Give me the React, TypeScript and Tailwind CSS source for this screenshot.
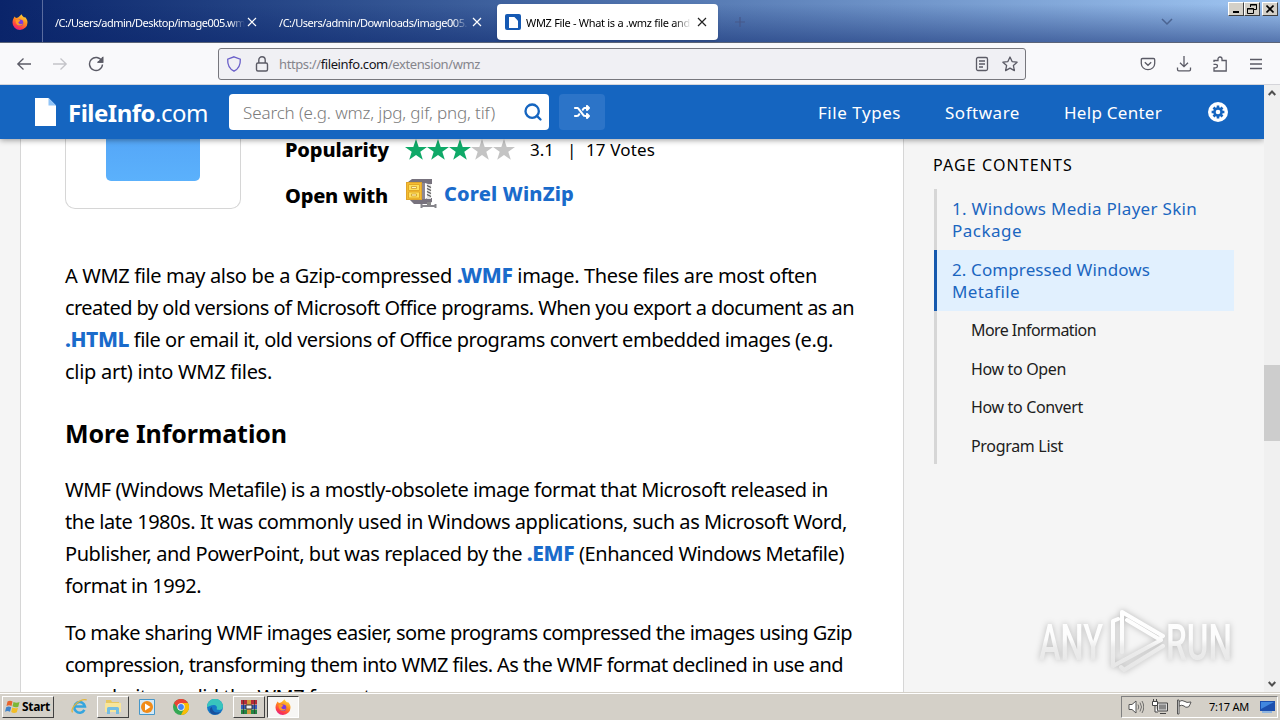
import { ReactNode, useLayoutEffect, useRef, useState } from 'react'
import { Search } from 'lucide-react'
import { FaShuffle } from 'react-icons/fa6'

interface ILine {
  children: ReactNode
  width: number
  classes?: string
}

// Single line of copy, tracked out to a given measure
function Line({ children, width, classes = '' }: ILine) {
  const ref = useRef<HTMLSpanElement>(null)
  const [spacing, setSpacing] = useState(0)

  useLayoutEffect(() => {
    const el = ref.current
    if (!el) return
    const count = el.textContent?.length || 1
    setSpacing((width - el.getBoundingClientRect().width) / count)
  }, [width])

  return (
    <span className={`block whitespace-nowrap ${classes}`}>
      <span ref={ref} style={{ letterSpacing: `${spacing}px` }}>
        {children}
      </span>
    </span>
  )
}

function FirefoxLogo({ classes }: { classes: string }) {
  return (
    <svg viewBox="0 0 16 16" className={classes}>
      <defs>
        <linearGradient id="fox" x1="0.8" y1="0" x2="0.3" y2="1">
          <stop offset="0" stopColor="#ffdf3c" />
          <stop offset="0.45" stopColor="#ff8a1e" />
          <stop offset="0.8" stopColor="#ff3b47" />
          <stop offset="1" stopColor="#e0208c" />
        </linearGradient>
      </defs>
      <path d="M2.5 2.5 4 4l2-.6C7.500 2.800 8 1.500 9.600.300c.3 1.500 1.600 2.100 2.500 3.200l.9-.5c2 2 2.600 4 2.500 5.700A7.500 7.300 0 0 1 .5 8.500C.5 6 1.500 4.500 2.500 2.500z" fill="url(#fox)" />
      <circle cx="8" cy="8.700" r="3.300" fill="#7a3be0" />
      <path d="M3.500 6.200c1.500-1 3-.7 4.800.2-.3 1-1.600 1.100-2 1.900.4 2 2.700 2.300 4.600 1.200-1 2.800-6 3-7-.8z" fill="#ff9a25" />
    </svg>
  )
}

function Close({ classes = 'text-white' }: { classes?: string }) {
  return (
    <svg viewBox="0 0 10 10" className={`h-2.5 w-2.5 shrink-0 ${classes}`} fill="none" stroke="currentColor" strokeWidth="1.200">
      <path d="M1 1l8 8M9 1l-8 8" />
    </svg>
  )
}

function WindowButton({ children }: { children: ReactNode }) {
  return (
    <span className="flex h-[14px] w-4 items-center justify-center border border-t-white border-l-white border-r-[#404040] border-b-[#404040] bg-[#d4d0c8]">
      {children}
    </span>
  )
}

function TabStrip() {
  return (
    <div className="relative flex h-[43px] shrink-0 border-b border-[#5b6478] bg-linear-to-r from-[#0a246a] to-[#a0c6f2] text-[11px]">
      <div className="absolute inset-0 bg-linear-to-b from-transparent from-10% to-[#0a246a]/50" />
      <div className="relative flex w-[43px] shrink-0 items-center justify-center border-r border-[#5a6c9f] pt-0.5 pr-0.5">
        <FirefoxLogo classes="h-4 w-4" />
      </div>
      <div className="relative flex w-[224px] shrink-0 items-center pt-[3px] pl-3 text-white">
        <div className="w-[190px] shrink-0 overflow-hidden pt-px mask-r-from-92%">
          <Line width={190}>/C:/Users/admin/Desktop/image005.wm</Line>
        </div>
        <span className="ml-0.5 flex pb-0.5">
          <Close />
        </span>
      </div>
      <div className="relative flex w-[230px] shrink-0 items-center pt-[3px] pl-3 text-white">
        <div className="w-[189px] shrink-0 overflow-hidden pt-px mask-r-from-92%">
          <Line width={188}>/C:/Users/admin/Downloads/image005.</Line>
        </div>
        <span className="ml-1 flex pb-0.5">
          <Close />
        </span>
      </div>
      <div className="relative mt-1 flex h-9 w-[221px] shrink-0 items-center rounded bg-white pl-2 text-black shadow">
        <span className="flex h-4 w-4 shrink-0 items-center justify-center rounded-xs bg-[#1559b3]">
          <svg viewBox="0 0 10 12" className="h-[11px] w-[9px]" fill="#fff">
            <path d="M0 0h6l4 4v8H0z" />
          </svg>
        </span>
        <div className="ml-[5px] w-[165px] shrink-0 overflow-hidden pt-0.5 mask-r-from-90%">
          <Line width={164}>WMZ File - What is a .wmz file and</Line>
        </div>
        <span className="ml-[6px] flex">
          <Close classes="text-[#222]" />
        </span>
      </div>
      <svg viewBox="0 0 10 10" className="relative mt-[17px] ml-[17px] h-2.5 w-2.5 shrink-0" stroke="#46588a" strokeWidth="1.200">
        <path d="M5 0v10M0 5h10" />
      </svg>
      <svg viewBox="0 0 12 8" className="relative mt-[18px] mr-[55px] ml-auto h-2 w-3 shrink-0" fill="none" stroke="#4b6491" strokeWidth="1.500">
        <path d="M1 1l5 5 5-5" />
      </svg>
      <div className="relative mt-0.5 mr-[2px] flex w-[50px] shrink-0 items-start">
        <WindowButton>
          <span className="mt-[6px] h-0.5 w-[6px] bg-black" />
        </WindowButton>
        <WindowButton>
          <svg viewBox="0 0 10 10" className="h-2.5 w-2.5" fill="none" stroke="#000">
            <path d="M3.500 3V.5h6v5H7M3 1h7M.5 4.500h6v5h-6zM0 5h7" />
          </svg>
        </WindowButton>
        <span className="ml-0.5">
          <WindowButton>
            <svg viewBox="0 0 8 8" className="h-2 w-2" stroke="#000" strokeWidth="1.600">
              <path d="M.5.5l7 7M7.500.5l-7 7" />
            </svg>
          </WindowButton>
        </span>
      </div>
    </div>
  )
}

function NavBar() {
  return (
    <div className="flex h-[42px] shrink-0 items-center border-b border-[#d5d5da] bg-[#f9f9fb] text-[#5b5b66]">
      <div className="flex w-[218px] items-center gap-5 pt-px pl-4">
        <svg viewBox="0 0 16 16" className="h-4 w-4" fill="none" stroke="currentColor" strokeWidth="1.300">
          <path d="M15 8H1.500M7.500 2.500L1.800 8l5.700 5.500" />
        </svg>
        <svg viewBox="0 0 16 16" className="h-4 w-4 text-[#c4c4c9]" fill="none" stroke="currentColor" strokeWidth="1.300">
          <path d="M1 8h13.500M8.500 2.500L14.200 8l-5.700 5.500" />
        </svg>
        <svg viewBox="0 0 16 16" className="h-4 w-4" fill="none" stroke="currentColor" strokeWidth="1.400">
          <path d="M13.800 5A6.500 6.500 0 1 0 14.500 8.500M14.600 1v5H9.700" />
          <path d="M14.600 2v4h-4z" fill="currentColor" />
        </svg>
      </div>
      <div className="flex h-8 w-[808px] items-center rounded-[3px] border border-[#77777d] bg-[#f0f0f4] px-[7px]">
        <svg viewBox="0 0 16 16" className="h-4 w-4" fill="none" stroke="#6a5fc9" strokeWidth="1.300">
          <path d="M8 .8l6.300 2.300c.3 5-1.300 9.500-6.300 12.100-5-2.600-6.600-7.100-6.300-12.100z" />
        </svg>
        <svg viewBox="0 0 16 16" className="ml-3 h-4 w-4" fill="none" stroke="currentColor" strokeWidth="1.400">
          <rect x="2.500" y="7" width="11" height="8" rx="1.500" />
          <path d="M4.800 7V4a3.200 3.200 0 0 1 6.400 0v3" />
        </svg>
        <div className="ml-[9px] pt-0.5 text-[13px] text-[#85858c]">
          <Line width={201}>
            https://<span className="text-[#15141a]">fileinfo.com</span>/extension/wmz
          </Line>
        </div>
        <svg viewBox="0 0 16 16" className="ml-auto h-4 w-4" fill="none" stroke="currentColor" strokeWidth="1.300">
          <rect x="2.500" y="1.500" width="11" height="13" rx="1.500" />
          <path d="M5 5h6M5 8h6M5 11h4" />
        </svg>
        <svg viewBox="0 0 16 16" className="ml-3 h-4 w-4" fill="none" stroke="currentColor" strokeWidth="1.300" strokeLinejoin="round">
          <path d="M8 1l2.100 4.600 5 .6-3.700 3.400 1 5L8 12.100l-4.400 2.500 1-5L.9 6.200l5-.6z" />
        </svg>
      </div>
      <div className="ml-auto flex items-center gap-5 pr-4">
        <svg viewBox="0 0 16 16" className="h-4 w-4" fill="none" stroke="currentColor" strokeWidth="1.300">
          <path d="M2.500 2.500h11q1.200 0 1.200 1.200v3.800a6.700 6.200 0 0 1-13.400 0V3.700q0-1.200 1.200-1.200zM4.800 6.200L8 9.300l3.200-3.100" />
        </svg>
        <svg viewBox="0 0 16 16" className="h-4 w-4" fill="none" stroke="currentColor" strokeWidth="1.300">
          <path d="M8 0v10.500M4 6.700l4 4 4-4M1.500 11.500v2q0 1.300 1.300 1.300h10.400q1.300 0 1.300-1.300v-2" />
        </svg>
        <svg viewBox="0 0 16 16" className="h-4 w-4" fill="none" stroke="currentColor" strokeWidth="1.300">
          <path d="M2 6V4.500h4V3a2 2 0 0 1 4 0v1.500h4.200V15H2v-3.200h1.700a1.700 1.700 0 0 0 0-3.500H1.500" />
        </svg>
        <svg viewBox="0 0 16 16" className="h-4 w-4" fill="none" stroke="currentColor" strokeWidth="1.300">
          <path d="M2 3.500h12M2 8h12M2 12.500h12" />
        </svg>
      </div>
    </div>
  )
}

function SiteHeader() {
  return (
    <header className="relative z-10 flex h-[54px] shrink-0 items-center bg-[#1565c0] text-[17px] text-white shadow-[0_1px_6px_rgba(0,0,0,0.4)]">
      <svg viewBox="0 0 21 28" className="ml-[35px] h-7 w-[21px]">
        <path d="M0 0h13.500L21 7.500V28H0z" fill="#fff" />
        <path d="M13.500 0L21 7.500h-7.500z" fill="#90c4f8" />
      </svg>
      <div className="ml-[12px] w-[148px] pt-0.5 font-['Noto_Sans'] text-[24px]">
        <Line width={140}>
          <b>FileInfo</b>.com
        </Line>
      </div>
      <div className="ml-[13px] flex h-9 w-80 items-center justify-between rounded bg-white pr-1.5 pl-3.5 text-[17px] text-[#7b7b7b]">
        <div className="pt-0.5 font-light">
          <Line width={252}>Search (e.g. wmz, jpg, gif, png, tif)</Line>
        </div>
        <Search className="h-5 w-5 text-[#1565c0]" strokeWidth={2.8} />
      </div>
      <div className="ml-2.5 flex h-9 w-[46px] items-center justify-center rounded bg-[#2c74c8]">
        <FaShuffle className="h-4 w-4" />
      </div>
      <nav className="ml-auto flex items-center pr-9">
        <div className="w-[127px] pt-0.5">
          <Line width={83}>File Types</Line>
        </div>
        <div className="w-[119px] pt-0.5">
          <Line width={75}>Software</Line>
        </div>
        <div className="w-[144px] pt-0.5">
          <Line width={98}>Help Center</Line>
        </div>
        <svg viewBox="0 0 20 20" className="h-5 w-5">
          <circle cx="10" cy="10" r="10" fill="#fff" />
          <g stroke="#1565c0" strokeWidth="2.600">
            <path d="M10 3.600v12.800M3.600 10h12.800M5.500 5.500l9 9M14.500 5.500l-9 9" />
          </g>
          <circle cx="10" cy="10" r="4.800" fill="#1565c0" />
          <circle cx="10" cy="10" r="2.300" fill="#fff" />
        </svg>
      </nav>
    </header>
  )
}

function Star({ classes }: { classes: string }) {
  return (
    <svg viewBox="0 0 22 21" className={`h-[21px] w-[22px] ${classes}`} fill="currentColor">
      <path d="M11 0l2.700 7.900H22l-6.700 4.900 2.500 8L11 16l-6.800 4.800 2.500-8L0 7.900h8.300z" />
    </svg>
  )
}

function WinZipIcon() {
  return (
    <svg viewBox="0 0 32 32" className="h-8 w-8">
      <path d="M3 4l4-3h20v5h-4l-3-1H5zM4 21h16l3-1h4v4l-5 2H9z" fill="#77727d" />
      <path d="M16 5h4v16h-4z" fill="#8d8893" />
      <rect x="1.500" y="4.500" width="15" height="17" fill="#f5bc31" stroke="#e0a52a" />
      <path d="M3.500 6.500h11v6h-11zM3.500 14h11v6h-11z" fill="#ffe05c" stroke="#e2a827" />
      <path d="M6.500 8.500h5v2h-5zM6.500 16h5v2h-5z" fill="#fff4bb" stroke="#c98f1c" strokeWidth=".7" />
      <path d="M24 6v15" stroke="#e3e3e3" strokeWidth="4" />
      <path d="M22 7.500l4 2M22 10.500l4 2M22 13.500l4 2M22 16.500l4 2" stroke="#555" strokeWidth="1.200" />
      <path d="M22 24h4v3h-4z" fill="#888" />
      <path d="M17 28h13M16.500 26v4M30.500 26v4" stroke="#86858b" strokeWidth="2" />
    </svg>
  )
}

function FileLink({ children }: { children: ReactNode }) {
  return <b className="text-[21px] leading-none font-extrabold text-[#1a6bcb]">{children}</b>
}

function Article() {
  return (
    <main className="ml-5 h-full w-[884px] shrink-0 overflow-hidden border-x border-[#d6d6d6] bg-white pl-11 text-[20px] leading-8 text-black">
      <div className="flex h-[70px]">
        <div className="flex w-44 items-start justify-center rounded-b-[10px] border border-t-0 border-[#d6d6d6]">
          <div className="h-[42px] w-[94px] rounded-b-[5px] bg-linear-to-b from-[#55a7f8] to-[#5bb1fc]" />
        </div>
        <div className="ml-11 flex flex-col">
          <div className="mt-[-6px] flex h-8 items-center">
            <div className="w-[120px] pt-0.5 font-extrabold">
              <Line width={104}>Popularity</Line>
            </div>
            <div className="flex">
              <Star classes="text-[#0fa968]" />
              <Star classes="text-[#0fa968]" />
              <Star classes="text-[#0fa968]" />
              <Star classes="text-[#c4c4c4]" />
              <Star classes="text-[#c4c4c4]" />
            </div>
            <div className="ml-[15px] flex pt-0.5 text-[17px]">
              <div className="w-[37px]">
                <Line width={24}>3.1</Line>
              </div>
              <span className="w-[19px]">|</span>
              <Line width={69}>17 Votes</Line>
            </div>
          </div>
          <div className="mt-[13px] flex h-8 items-center font-extrabold">
            <div className="w-[120px] pt-1">
              <Line width={103}>Open with</Line>
            </div>
            <WinZipIcon />
            <div className="ml-[7px] text-[#1a6bcb]">
              <Line width={130}>Corel WinZip</Line>
            </div>
          </div>
        </div>
      </div>

      <p className="mt-[51px]">
        <Line width={752}>
          A WMZ file may also be a Gzip-compressed <FileLink>.WMF</FileLink> image. These files are most often
        </Line>
        <Line width={789}>created by old versions of Microsoft Office programs. When you export a document as an</Line>
        <Line width={768}>
          <FileLink>.HTML</FileLink> file or email it, old versions of Office programs convert embedded images (e.g.
        </Line>
        <Line width={207}>clip art) into WMZ files.</Line>
      </p>
      <h2 className="mt-[29px] text-[25px] font-bold">
        <Line width={222}>More Information</Line>
      </h2>
      <p className="mt-[25px]">
        <Line width={763}>WMF (Windows Metafile) is a mostly-obsolete image format that Microsoft released in</Line>
        <Line width={782}>the late 1980s. It was commonly used in Windows applications, such as Microsoft Word,</Line>
        <Line width={779}>
          Publisher, and PowerPoint, but was replaced by the <FileLink>.EMF</FileLink> (Enhanced Windows Metafile)
        </Line>
        <Line width={136}>format in 1992.</Line>
      </p>
      <p className="mt-[15px]">
        <Line width={787}>To make sharing WMF images easier, some programs compressed the images using Gzip</Line>
        <Line width={778}>compression, transforming them into WMZ files. As the WMF format declined in use and</Line>
        <Line width={310}>popularity, so did the WMZ format.</Line>
      </p>
    </main>
  )
}

const sections = [
  { label: 'More Information', width: 125 },
  { label: 'How to Open', width: 95 },
  { label: 'How to Convert', width: 112 },
  { label: 'Program List', width: 92 },
]

function Contents() {
  return (
    <aside className="ml-[29px] w-[301px] pt-[14px] text-[17px] text-black">
      <div className="text-base leading-6">
        <Line width={140}>PAGE CONTENTS</Line>
      </div>
      <div className="mt-3 ml-px leading-[22px] text-[#1b66c0]">
        <div className="h-[61px] border-l-3 border-[#d6d6d6] pt-[9px] pl-[15px]">
          <Line width={245}>1. Windows Media Player Skin</Line>
          <Line width={70}>Package</Line>
        </div>
        <div className="h-[61px] border-l-3 border-[#1559ae] bg-[#e1f0fe] pt-[9px] pl-[15px]">
          <Line width={198}>2. Compressed Windows</Line>
          <Line width={68}>Metafile</Line>
        </div>
        <div className="h-[153px] border-l-3 border-[#d6d6d6] text-base leading-[38.5px] text-[#202020]">
          {sections.map((s) => (
            <div key={s.label} className="pl-[34px]">
              <Line width={s.width}>{s.label}</Line>
            </div>
          ))}
        </div>
      </div>
    </aside>
  )
}

function Watermark() {
  return (
    <div className="absolute top-[604px] left-[1036px] h-[72px] w-[200px] drop-shadow-[0_0_3px_rgba(0,0,0,0.25)]">
      <svg viewBox="0 0 200 72" className="h-full w-full">
        <defs>
          <linearGradient id="mark" gradientUnits="userSpaceOnUse" x1="0" y1="10" x2="0" y2="66">
            <stop offset="0" stopColor="#fff" />
            <stop offset="0.45" stopColor="#fcfcfc" />
            <stop offset="0.6" stopColor="#ececec" />
            <stop offset="1" stopColor="#e6e6e6" />
          </linearGradient>
        </defs>
        <g fill="url(#mark)" fontFamily="Roboto, sans-serif" fontSize="50" fontWeight="500">
          <text x="3" y="56" textLength="64" lengthAdjust="spacingAndGlyphs">ANY</text>
          <text x="130" y="56" textLength="66" lengthAdjust="spacingAndGlyphs">RUN</text>
        </g>
        <g fill="none" stroke="url(#mark)" strokeWidth="4" strokeLinecap="round" strokeLinejoin="round">
          <path d="M86 48V8l41 24-4 3-32-19M82 15l-5 2v45l48-26M127 42L88 66l-3-3" />
        </g>
      </svg>
    </div>
  )
}

function ScrollBar() {
  return (
    <div className="flex w-4 shrink-0 flex-col items-center bg-[#f0f0f0] text-[#505050]">
      <svg viewBox="0 0 8 6" className="mt-[5px] h-1.5 w-2" fill="none" stroke="currentColor" strokeWidth="2">
        <path d="M.7 5L4 1.500 7.300 5" />
      </svg>
      <div className="mt-[269px] h-[76px] w-full bg-[#cdcdcd]" />
      <svg viewBox="0 0 8 6" className="mt-auto mb-[5px] h-1.5 w-2" fill="none" stroke="currentColor" strokeWidth="2">
        <path d="M.7 1L4 4.500 7.300 1" />
      </svg>
    </div>
  )
}

function TaskButton({ children, active = false }: { children: ReactNode; active?: boolean }) {
  return (
    <span
      className={`flex h-[22px] w-8 items-center justify-center border ${
        active
          ? 'border-t-[#404040] border-r-white border-b-white border-l-[#404040] bg-[#f7f6f4]'
          : 'border-t-white border-r-[#404040] border-b-[#404040] border-l-white bg-[#d4d0c8]'
      }`}
    >
      {children}
    </span>
  )
}

function TaskBar() {
  return (
    <footer className="flex h-7 shrink-0 items-center border-t border-[#d4d0c8] bg-[#d4d0c8] pr-0.5 pl-0.5 text-[11px] text-black shadow-[inset_0_1px_0_#fff]">
      <div className="flex h-[22px] w-[52px] items-center border border-t-white border-r-[#404040] border-b-[#404040] border-l-white pl-0.5 font-bold">
        <svg viewBox="0 0 16 16" className="mr-px h-4 w-4 shrink-0">
          <path d="M2.500 2.500q2.500-1.500 5 0l-1 4.500q-2.500-1.500-5 0z" fill="#e8642c" />
          <path d="M8.500 3q3 1.500 6 0l-1.200 4.700q-3 1.300-5.800-.4z" fill="#7bb737" />
          <path d="M1.200 8.200q2.600-1.500 5 0L5 12.700q-2.500-1.500-5 0z" fill="#3f83c9" />
          <path d="M7.300 8.500q3 1.500 5.700.2l-1.200 4.600q-3 1.300-5.600-.3z" fill="#f3be26" />
        </svg>
        <Line width={28} classes="text-xs">
          Start
        </Line>
      </div>
      <svg viewBox="0 0 16 16" className="ml-[17px] h-[17px] w-[17px]" fill="none">
        <path d="M12.600 11.200A5 5 0 1 1 13.100 8H4" stroke="#35a5de" strokeWidth="2.400" />
        <path d="M1.500 13.500C-1 10 8 0 14.800 1.800" stroke="#e2b53b" strokeWidth="1.200" />
      </svg>
      <div className="ml-[9px]">
        <TaskButton>
          <svg viewBox="0 0 18 16" className="h-4 w-[18px]">
            <path d="M2 1h5l1 2h7v3H2z" fill="#e7c761" />
            <path d="M1 4h16v9H1z" fill="#f8e59a" />
            <path d="M3 15V9.500Q3 8 4.500 8h9Q15 8 15 9.500V15h-3v-4H6v4z" fill="#74bde2" />
          </svg>
        </TaskButton>
      </div>
      <svg viewBox="0 0 16 16" className="ml-2.5 h-4 w-4">
        <path d="M.5.5h15v15H.5z" fill="#d4e9f7" stroke="#4697c9" />
        <circle cx="8" cy="8" r="6" fill="#f18b18" />
        <path d="M6 4.500l5.500 3.500L6 11.500z" fill="#fff" />
      </svg>
      <svg viewBox="0 0 16 16" className="ml-[18px] h-4 w-4">
        <circle cx="8" cy="8" r="8" fill="#34a853" />
        <path d="M1 4a8 8 0 0 1 14 0L8 8z" fill="#ea4335" />
        <path d="M1 4l4 6 3-2V4z" fill="#ea4335" />
        <path d="M15 4a8 8 0 0 1-7 12l4-8-4-4z" fill="#fbbc05" />
        <circle cx="8" cy="8" r="3.700" fill="#fff" />
        <circle cx="8" cy="8" r="2.900" fill="#4285f4" />
      </svg>
      <svg viewBox="0 0 16 16" className="ml-[18px] h-4 w-4">
        <circle cx="8" cy="8" r="8" fill="#1679c7" />
        <path d="M0 8a8 8 0 0 1 16-.5c0 4-5 4-6.500 2.500 1-1 .5-4-2.500-4-3 0-6 2-7 2z" fill="#38c5bd" />
        <path d="M5 8c0 5 5 7 9 4.500A8 8 0 0 1 5 15c-3-2-3-6 0-7z" fill="#174f9c" />
      </svg>
      <div className="ml-2.5">
        <TaskButton>
          <svg viewBox="0 0 16 16" className="h-4 w-4">
            <path d="M0 1h16v4.500H0z" fill="#b52b38" />
            <path d="M0 6h16v4H0z" fill="#375bbd" />
            <path d="M0 10.500h16V15H0z" fill="#238443" />
            <path d="M6 1h4v14H6z" fill="#d19b3b" />
            <path d="M5 6h6v4H5z" fill="#eee" stroke="#333" />
            <path d="M2.500 1v14M13.500 1v14" stroke="#333" strokeWidth=".7" />
          </svg>
        </TaskButton>
      </div>
      <div className="ml-0.5">
        <TaskButton active>
          <FirefoxLogo classes="h-4 w-4" />
        </TaskButton>
      </div>
      <div className="ml-auto flex h-[22px] w-[157px] items-center border border-t-[#808080] border-r-white border-b-white border-l-[#808080] pl-[6px]">
        <svg viewBox="0 0 16 16" className="h-4 w-4" fill="none" stroke="#555">
          <path d="M1 5.500h3L8 2v12l-4-3.500H1z" fill="#fff" />
          <path d="M10 5.500q1.500 2.500 0 5M12 3.500q3 4.500 0 9M14 2q3.500 6 0 12" strokeWidth=".8" />
        </svg>
        <svg viewBox="0 0 16 16" className="ml-2 h-4 w-4" stroke="#444">
          <path d="M5.500 4h10v8h-10z" fill="#ddd" />
          <path d="M7 5.500h7v5H7z" fill="#888" stroke="none" />
          <path d="M8 14.500h6M.5 2.500h5v4h-5zM1.500 0v2M4.500 0v2M3 7v6h3" fill="#fff" />
        </svg>
        <svg viewBox="0 0 16 16" className="ml-2 h-4 w-4" fill="#fff" stroke="#555">
          <path d="M3 2.500q3-2 6 0 1 1.500 6 .5-1 3-2.500 5-3 1-4.500-1-2-1.500-5 0z" />
          <path d="M1.500 1h1.500v14H1.500z" />
        </svg>
        <div className="ml-[17px] w-[51px] pt-px">
          <Line width={40}>7:17 AM</Line>
        </div>
        <svg viewBox="0 0 16 14" className="h-[14px] w-4">
          <path d="M0 1h15v10H0z" fill="#1c4fae" />
          <path d="M1 2h13L1 9z" fill="#4187df" />
          <path d="M2 11h10v2H2z" fill="#8fb5df" />
        </svg>
      </div>
    </footer>
  )
}

export default function App() {
  return (
    <div className="relative flex h-[720px] w-[1280px] flex-col overflow-hidden bg-[#f5f5f5] font-['Noto_Sans',sans-serif]">
      <TabStrip />
      <NavBar />
      <div className="flex min-h-0 flex-1">
        <div className="flex w-[1264px] flex-col overflow-hidden">
          <SiteHeader />
          <div className="flex min-h-0 flex-1">
            <Article />
            <Contents />
          </div>
        </div>
        <ScrollBar />
      </div>
      <TaskBar />
      <Watermark />
    </div>
  )
}
